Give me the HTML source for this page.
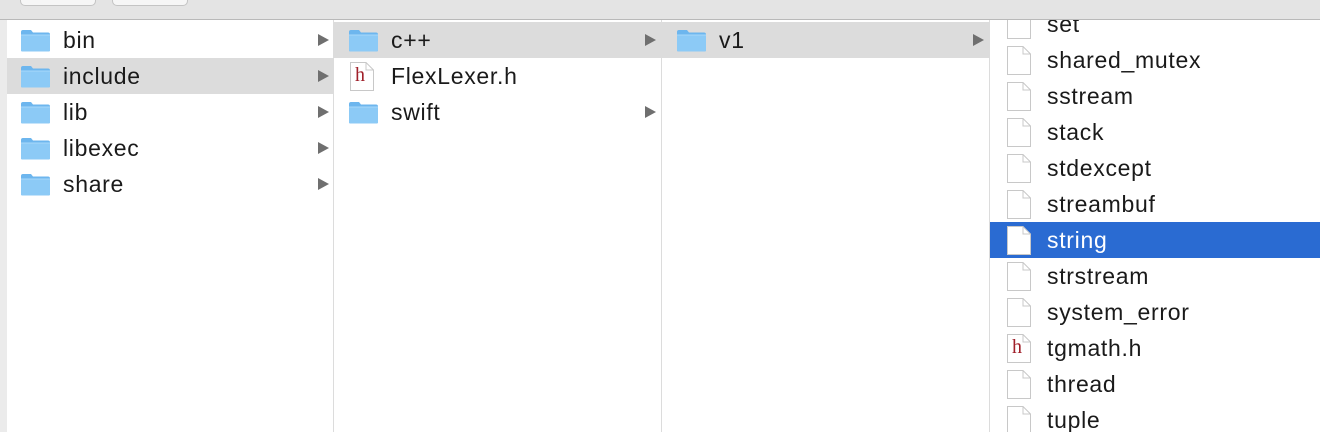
<!DOCTYPE html>
<html><head><style>
*{margin:0;padding:0;box-sizing:border-box}
body{width:1320px;height:432px;overflow:hidden;background:#fff;font-family:"Liberation Sans",Arial,sans-serif;font-size:23px;letter-spacing:0.7px;color:#1a1a1a;position:relative}
.tb{position:absolute;left:0;top:0;width:1320px;height:20px;background:#e4e4e4;border-bottom:1px solid #b9b9b9;z-index:5}
.btn{position:absolute;top:-6px;height:12px;background:#f6f6f6;border:1px solid #c4c4c4;border-radius:5px}
.strip{position:absolute;left:0;top:20px;width:7px;height:412px;background:#ebebeb}
.col{position:absolute;top:20px;height:412px;border-right:1px solid #dcdcdc;overflow:hidden}
.row{position:absolute;left:0;right:0;height:36px;}
.row .t{position:absolute;top:5px;line-height:26px}
.sel{background:#dcdcdc}
.blue{background:#2a6bd2;color:#fff}
.fold{position:absolute;top:7px;width:31px;height:23px}
.arr{position:absolute;top:12px;width:0;height:0;border-top:6px solid transparent;border-bottom:6px solid transparent;border-left:11px solid #6f6f6f}
.doc{position:absolute;top:4px;width:24px;height:29px}
</style></head><body>
<div class="tb"><div class="btn" style="left:20px;width:76px"></div><div class="btn" style="left:112px;width:76px"></div></div>
<div class="strip"></div>
<svg width="0" height="0" style="position:absolute"><defs>
<symbol id="f" viewBox="0 0 31 23"><path d="M1 3 Q1 1 3 1 L11 1 L13 3.5 L28 3.5 Q30 3.5 30 5.5 L30 21 Q30 22.5 28.5 22.5 L2.5 22.5 Q1 22.5 1 21 Z" fill="#6db6ee"/><path d="M1 6 L30 6 L30 21 Q30 22.5 28.5 22.5 L2.5 22.5 Q1 22.5 1 21 Z" fill="#8ccaf6"/><path d="M1 6 L30 6" stroke="#a8d8fa" stroke-width="1"/></symbol>
<symbol id="d" viewBox="0 0 24 29"><path d="M0.5 0.5 L16 0.5 L23.5 8 L23.5 28.5 L0.5 28.5 Z" fill="#fff" stroke="#c8c8c8"/><path d="M16 0.5 L16 8 L23.5 8" fill="none" stroke="#c8c8c8"/></symbol>
</defs></svg>

<div class="col" style="left:7px;width:327px">
 <div class="row" style="top:2px"><svg class="fold" style="left:13px"><use href="#f"/></svg><span class="t" style="left:56px">bin</span><i class="arr" style="left:311px"></i></div>
 <div class="row sel" style="top:38px"><svg class="fold" style="left:13px"><use href="#f"/></svg><span class="t" style="left:56px">include</span><i class="arr" style="left:311px"></i></div>
 <div class="row" style="top:74px"><svg class="fold" style="left:13px"><use href="#f"/></svg><span class="t" style="left:56px">lib</span><i class="arr" style="left:311px"></i></div>
 <div class="row" style="top:110px"><svg class="fold" style="left:13px"><use href="#f"/></svg><span class="t" style="left:56px">libexec</span><i class="arr" style="left:311px"></i></div>
 <div class="row" style="top:146px"><svg class="fold" style="left:13px"><use href="#f"/></svg><span class="t" style="left:56px">share</span><i class="arr" style="left:311px"></i></div>
</div>
<div class="col" style="left:334px;width:328px">
 <div class="row sel" style="top:2px"><svg class="fold" style="left:14px"><use href="#f"/></svg><span class="t" style="left:57px">c++</span><i class="arr" style="left:311px"></i></div>
 <div class="row" style="top:38px"><svg class="doc" style="left:16px"><use href="#d"/></svg><span style="position:absolute;left:21px;top:6px;font-family:'Liberation Serif',serif;color:#a0202a;font-size:20px;letter-spacing:0">h</span><span class="t" style="left:57px">FlexLexer.h</span></div>
 <div class="row" style="top:74px"><svg class="fold" style="left:14px"><use href="#f"/></svg><span class="t" style="left:57px">swift</span><i class="arr" style="left:311px"></i></div>
</div>
<div class="col" style="left:662px;width:328px">
 <div class="row sel" style="top:2px"><svg class="fold" style="left:14px"><use href="#f"/></svg><span class="t" style="left:57px">v1</span><i class="arr" style="left:311px"></i></div>
</div>
<div class="col" style="left:990px;width:330px;border:none">
 <div class="row" style="top:-14px"><svg class="doc" style="left:17px"><use href="#d"/></svg><span class="t" style="left:57px">set</span></div>
 <div class="row" style="top:22px"><svg class="doc" style="left:17px"><use href="#d"/></svg><span class="t" style="left:57px">shared_mutex</span></div>
 <div class="row" style="top:58px"><svg class="doc" style="left:17px"><use href="#d"/></svg><span class="t" style="left:57px">sstream</span></div>
 <div class="row" style="top:94px"><svg class="doc" style="left:17px"><use href="#d"/></svg><span class="t" style="left:57px">stack</span></div>
 <div class="row" style="top:130px"><svg class="doc" style="left:17px"><use href="#d"/></svg><span class="t" style="left:57px">stdexcept</span></div>
 <div class="row" style="top:166px"><svg class="doc" style="left:17px"><use href="#d"/></svg><span class="t" style="left:57px">streambuf</span></div>
 <div class="row blue" style="top:202px"><svg class="doc" style="left:17px"><use href="#d"/></svg><span class="t" style="left:57px">string</span></div>
 <div class="row" style="top:238px"><svg class="doc" style="left:17px"><use href="#d"/></svg><span class="t" style="left:57px">strstream</span></div>
 <div class="row" style="top:274px"><svg class="doc" style="left:17px"><use href="#d"/></svg><span class="t" style="left:57px">system_error</span></div>
 <div class="row" style="top:310px"><svg class="doc" style="left:17px"><use href="#d"/></svg><span style="position:absolute;left:22px;top:6px;font-family:'Liberation Serif',serif;color:#a0202a;font-size:20px;letter-spacing:0">h</span><span class="t" style="left:57px">tgmath.h</span></div>
 <div class="row" style="top:346px"><svg class="doc" style="left:17px"><use href="#d"/></svg><span class="t" style="left:57px">thread</span></div>
 <div class="row" style="top:382px"><svg class="doc" style="left:17px"><use href="#d"/></svg><span class="t" style="left:57px">tuple</span></div>
</div>
</body></html>
